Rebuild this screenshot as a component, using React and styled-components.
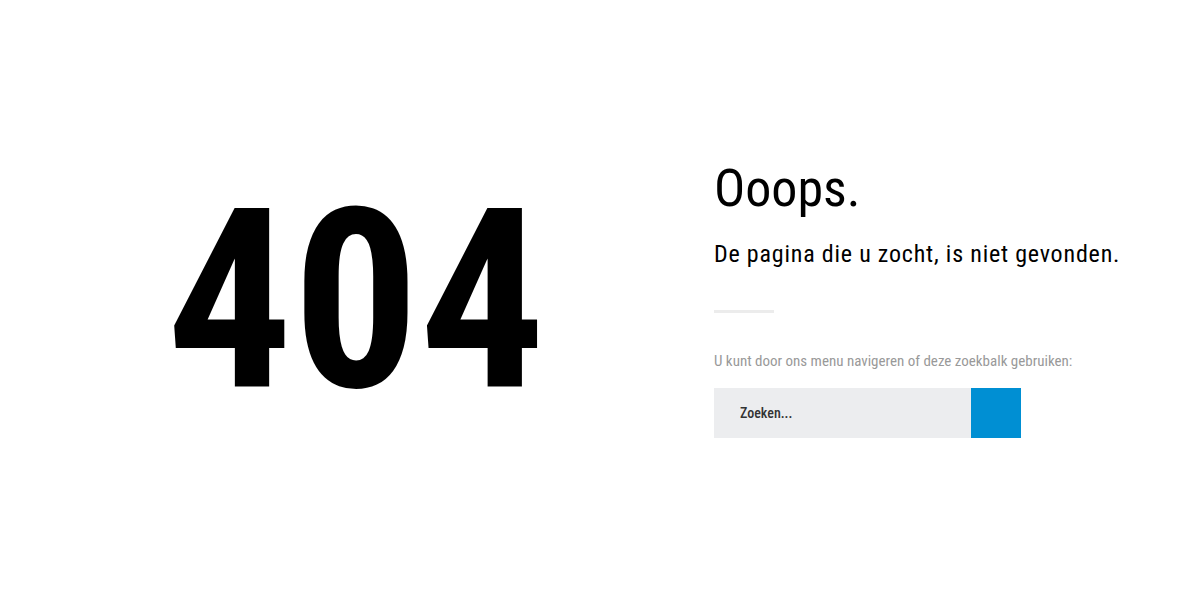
import React from 'react';
import styled, { createGlobalStyle } from 'styled-components';

const GlobalStyle = createGlobalStyle`
	html, body {
		margin: 0;
		background: #fff;
	}
	body {
		font-family: "Roboto Condensed", Roboto, sans-serif;
		font-stretch: condensed;
		color: #000;
	}
`;

const Page = styled.main`
	min-height: 600px;
	display: grid;
	grid-template-columns: 476px 1fr;
	column-gap: 120px;
	align-items: start;
	padding-left: 118px;
	box-sizing: border-box;
`;

const Code = styled.div`
	margin-top: 177px;
	font-size: 250px;
	font-weight: 700;
	line-height: 1;
	text-align: center;
`;

const Content = styled.section`
	display: flex;
	flex-direction: column;
	align-items: flex-start;
	margin-top: 163px;
`;

const Title = styled.h1`
	margin: 0;
	font-size: 52px;
	font-weight: 400;
	line-height: 52px;
`;

const Subtitle = styled.h2`
	margin: 24px 0 0;
	font-size: 24px;
	font-weight: 400;
	line-height: 30px;
	letter-spacing: 0.8px;
`;

const Divider = styled.hr`
	width: 60px;
	height: 3px;
	margin: 41px 0 0;
	border: 0;
	background: #ececec;
`;

const Hint = styled.p`
	margin: 39px 0 0;
	font-size: 15px;
	line-height: 18px;
	color: #999;
`;

const SearchForm = styled.form`
	display: flex;
	margin-top: 18px;
	height: 50px;
`;

const SearchInput = styled.input`
	width: 257px;
	height: 100%;
	box-sizing: border-box;
	padding: 0 26px;
	border: 0;
	border-radius: 0;
	outline: none;
	background: #ecedef;
	font-family: inherit;
	font-stretch: condensed;
	font-size: 14px;
	font-weight: 500;
	color: #333;

	&::placeholder {
		color: #333;
		opacity: 1;
	}
`;

const SearchButton = styled.button`
	width: 50px;
	height: 100%;
	border: 0;
	border-radius: 0;
	padding: 0;
	background: #008fd3;
	cursor: pointer;
`;

export default function App() {
	return (
		<>
			<GlobalStyle />
			<Page>
				<Code>404</Code>
				<Content>
					<Title>Ooops.</Title>
					<Subtitle>De pagina die u zocht, is niet gevonden.</Subtitle>
					<Divider />
					<Hint>U kunt door ons menu navigeren of deze zoekbalk gebruiken:</Hint>
					<SearchForm onSubmit={(e) => e.preventDefault()}>
						<SearchInput type="search" placeholder="Zoeken..." />
						<SearchButton type="submit" aria-label="Zoeken" />
					</SearchForm>
				</Content>
			</Page>
		</>
	);
}
